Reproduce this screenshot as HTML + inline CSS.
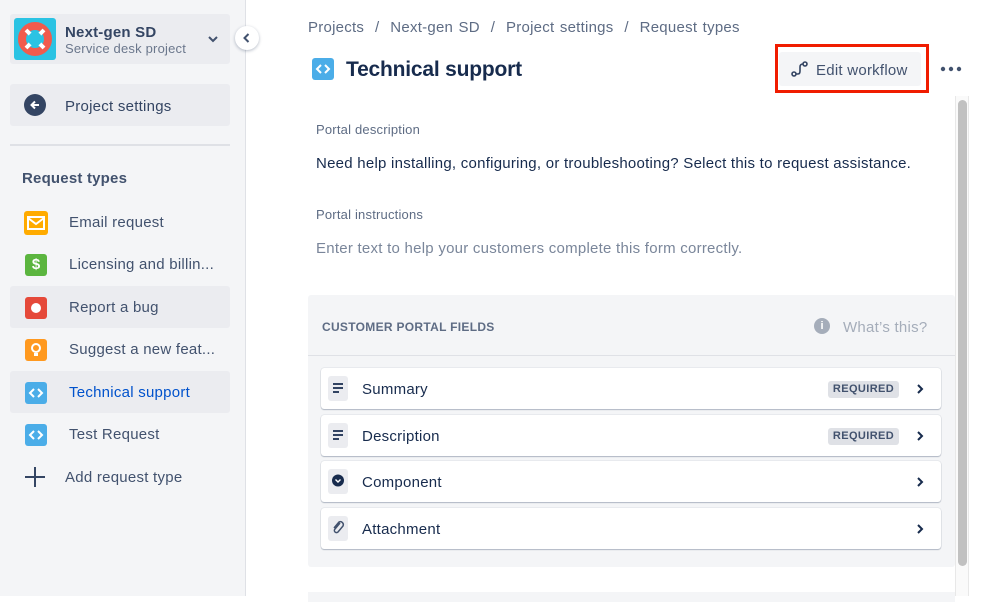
<!DOCTYPE html>
<html><head><meta charset="utf-8"><style>
*{box-sizing:border-box;margin:0;padding:0}
body{width:999px;height:596px;overflow:hidden;background:#fff;font-family:"Liberation Sans",sans-serif;color:#172b4d;position:relative}
.a{position:absolute}
.s15{font-size:15px;letter-spacing:.25px}
.side{left:0;top:0;width:246px;height:596px;background:#f4f5f7;border-right:1px solid #dfe1e6}
.item{position:absolute;left:10px;width:220px;height:42px;border-radius:3px}
.item .ic{position:absolute;left:14px;top:10px;width:24px;height:24px;border-radius:3px}
.item .t{position:absolute;left:59px;top:13px;font-size:15px;letter-spacing:.25px;color:#42526e}
.row{position:absolute;left:321px;width:620px;height:41px;background:#fff;border-radius:3px;box-shadow:0 1px 1px rgba(9,30,66,.25),0 0 1px rgba(9,30,66,.31)}
.row .ib{position:absolute;left:7px;top:8px;width:20px;height:25px;background:#ebecf0;border-radius:3px}
.row .t{position:absolute;left:41px;top:13px;font-size:15px;letter-spacing:.25px;color:#172b4d}
.req{position:absolute;left:507px;top:13px;width:71px;height:17px;background:#dfe1e6;border-radius:3px;font-size:11px;font-weight:bold;color:#42526e;text-align:center;line-height:17px;letter-spacing:.4px}
.chev{position:absolute;left:594px;top:14px}
</style></head><body>
<div class="a side"></div>
<div class="a" style="left:10px;top:14px;width:220px;height:50px;background:#ebecf0;border-radius:3px"></div>
<div class="a" style="left:14px;top:18px;width:42px;height:42px;background:#2bc3e3;border-radius:3px">
<svg width="42" height="42" viewBox="0 0 42 42"><circle cx="21" cy="21" r="13" fill="none" stroke="#f15b4d" stroke-width="8"/><g stroke="#fff" stroke-width="4"><path d="M12 12l5 5M30 12l-5 5M12 30l5-5M30 30l-5-5"/></g><circle cx="21" cy="21" r="7" fill="#2bc3e3"/></svg></div>
<div class="a" style="left:65px;top:24px;font-size:15px;font-weight:bold;color:#344563;letter-spacing:.2px">Next-gen SD</div>
<div class="a" style="left:65px;top:41px;font-size:13px;color:#6b778c;letter-spacing:.2px">Service desk project</div>
<svg class="a" style="left:207px;top:35px" width="12" height="8"><path d="M2 2l4 4 4-4" fill="none" stroke="#42526e" stroke-width="2"/></svg>
<div class="a" style="left:235px;top:26px;width:24px;height:24px;border-radius:50%;background:#fff;box-shadow:0 1px 3px rgba(9,30,66,.3)"><svg width="24" height="24"><path d="M13.5 8l-4 4 4 4" fill="none" stroke="#42526e" stroke-width="2"/></svg></div>
<div class="a" style="left:10px;top:84px;width:220px;height:42px;background:#ebecf0;border-radius:3px"></div>
<div class="a" style="left:24px;top:94px;width:22px;height:22px;border-radius:50%;background:#344563"><svg width="22" height="22"><path d="M15 11H8M11 7.5L7.5 11 11 14.5" fill="none" stroke="#fff" stroke-width="2"/></svg></div>
<div class="a s15" style="left:65px;top:98px;color:#344563">Project settings</div>
<div class="a" style="left:10px;top:144px;width:220px;height:2px;background:#dfe1e6"></div>
<div class="a" style="left:22px;top:170px;font-size:15px;font-weight:bold;color:#42526e;letter-spacing:.2px">Request types</div>

<div class="item" style="top:201px"><div class="ic" style="background:#ffab00"><svg width="24" height="24"><rect x="4" y="6" width="16" height="12" fill="none" stroke="#fff" stroke-width="2"/><path d="M4 7l8 6 8-6" fill="none" stroke="#fff" stroke-width="2"/></svg></div><div class="t">Email request</div></div>
<div class="item" style="top:243px"><div class="ic" style="background:#5bb53f;left:15px;width:22px;height:22px;top:11px"><div style="color:#fff;font-weight:bold;font-size:15px;text-align:center;line-height:22px">$</div></div><div class="t">Licensing and billin...</div></div>
<div class="item" style="top:286px;background:#ebecf0"><div class="ic" style="background:#e5493a;left:15px;width:22px;height:22px;top:11px"><div style="position:absolute;left:6px;top:6px;width:10px;height:10px;border-radius:50%;background:#fff"></div></div><div class="t">Report a bug</div></div>
<div class="item" style="top:328px"><div class="ic" style="background:#ff991f;left:15px;width:22px;height:22px;top:11px"><svg width="22" height="22"><circle cx="11" cy="9" r="4" fill="none" stroke="#fff" stroke-width="2"/><path d="M9 14h4v3H9z" fill="#fff"/></svg></div><div class="t">Suggest a new feat...</div></div>
<div class="item" style="top:371px;background:#ebecf0"><div class="ic" style="background:#4bade8;left:15px;width:22px;height:22px;top:11px"><svg width="22" height="22"><path d="M9 7l-4 4 4 4M13 7l4 4-4 4" fill="none" stroke="#fff" stroke-width="2"/></svg></div><div class="t" style="color:#0052cc">Technical support</div></div>
<div class="item" style="top:413px"><div class="ic" style="background:#4bade8;left:15px;width:22px;height:22px;top:11px"><svg width="22" height="22"><path d="M9 7l-4 4 4 4M13 7l4 4-4 4" fill="none" stroke="#fff" stroke-width="2"/></svg></div><div class="t">Test Request</div></div>
<svg class="a" style="left:24px;top:466px" width="22" height="22"><path d="M11 1v20M1 11h20" stroke="#344563" stroke-width="2"/></svg>
<div class="a s15" style="left:65px;top:469px;color:#42526e">Add request type</div>

<div class="a s15" style="left:308px;top:19px;color:#5e6c84;word-spacing:1px">Projects &nbsp;/&nbsp; Next-gen SD &nbsp;/&nbsp; Project settings &nbsp;/&nbsp; Request types</div>
<div class="a" style="left:312px;top:58px;width:22px;height:22px;background:#4bade8;border-radius:3px"><svg width="22" height="22"><path d="M9 7l-4 4 4 4M13 7l4 4-4 4" fill="none" stroke="#fff" stroke-width="2"/></svg></div>
<div class="a" style="left:346px;top:58px;font-size:21px;font-weight:bold;color:#172b4d;letter-spacing:-.2px">Technical support</div>
<div class="a" style="left:775px;top:44px;width:154px;height:49px;border:3px solid #f01c00"></div>
<div class="a" style="left:779px;top:52px;width:142px;height:34px;background:#f4f5f7;border-radius:3px"></div>
<svg class="a" style="left:790px;top:60px" width="20" height="18"><circle cx="4" cy="14" r="2" fill="none" stroke="#344563" stroke-width="1.6"/><circle cx="15" cy="4" r="2" fill="none" stroke="#344563" stroke-width="1.6"/><path d="M6 14h2q2 0 2-3V7q0-3 3-3" fill="none" stroke="#344563" stroke-width="1.6"/></svg>
<div class="a s15" style="left:816px;top:62px;color:#42526e">Edit workflow</div>
<svg class="a" style="left:940px;top:66px" width="22" height="6"><circle cx="3" cy="3" r="2.2" fill="#42526e"/><circle cx="11" cy="3" r="2.2" fill="#42526e"/><circle cx="19" cy="3" r="2.2" fill="#42526e"/></svg>

<div class="a" style="left:955px;top:96px;width:14px;height:500px;background:#fafafa;border-left:1px solid #e8e8e8;border-right:1px solid #e8e8e8"></div>
<div class="a" style="left:958px;top:100px;width:9px;height:466px;background:#c1c1c1;border-radius:5px"></div>

<div class="a" style="left:316px;top:122px;font-size:13px;color:#5e6c84;letter-spacing:.2px">Portal description</div>
<div class="a s15" style="left:316px;top:155px;color:#172b4d">Need help installing, configuring, or troubleshooting? Select this to request assistance.</div>
<div class="a" style="left:316px;top:207px;font-size:13px;color:#5e6c84;letter-spacing:.2px">Portal instructions</div>
<div class="a s15" style="left:316px;top:240px;color:#7a869a">Enter text to help your customers complete this form correctly.</div>

<div class="a" style="left:308px;top:295px;width:647px;height:272px;background:#f4f5f7;border-radius:3px"></div>
<div class="a" style="left:308px;top:355px;width:647px;height:1px;background:#dfe1e6"></div>
<div class="a" style="left:322px;top:320px;font-size:12px;font-weight:bold;color:#5e6c84;letter-spacing:.3px">CUSTOMER PORTAL FIELDS</div>
<div class="a" style="left:814px;top:318px;width:16px;height:16px;border-radius:50%;background:#a5adba;color:#fff;font-size:11px;font-weight:bold;text-align:center;line-height:16px">i</div>
<div class="a s15" style="left:843px;top:319px;color:#a5adba">What’s this?</div>

<div class="row" style="top:368px"><div class="ib"><svg width="20" height="25"><path d="M5 8h10M5 12h10M5 16h6" stroke="#172b4d" stroke-width="1.8"/></svg></div><div class="t">Summary</div><div class="req">REQUIRED</div><svg class="chev" width="10" height="14"><path d="M3 3l4 4-4 4" fill="none" stroke="#172b4d" stroke-width="2"/></svg></div>
<div class="row" style="top:415px"><div class="ib"><svg width="20" height="25"><path d="M5 8h10M5 12h10M5 16h6" stroke="#172b4d" stroke-width="1.8"/></svg></div><div class="t">Description</div><div class="req">REQUIRED</div><svg class="chev" width="10" height="14"><path d="M3 3l4 4-4 4" fill="none" stroke="#172b4d" stroke-width="2"/></svg></div>
<div class="row" style="top:461px"><div class="ib"><svg width="20" height="25"><circle cx="10" cy="11.5" r="6" fill="#172b4d"/><path d="M7.5 10.5l2.5 2.5 2.5-2.5" fill="none" stroke="#fff" stroke-width="1.4"/></svg></div><div class="t">Component</div><svg class="chev" width="10" height="14"><path d="M3 3l4 4-4 4" fill="none" stroke="#172b4d" stroke-width="2"/></svg></div>
<div class="row" style="top:508px"><div class="ib"><svg width="20" height="25"><path d="M12 7l-5 6a2 2 0 0 0 3 3l5-6a3 3 0 0 0-4-4l-5 6" fill="none" stroke="#42526e" stroke-width="1.5"/></svg></div><div class="t">Attachment</div><svg class="chev" width="10" height="14"><path d="M3 3l4 4-4 4" fill="none" stroke="#172b4d" stroke-width="2"/></svg></div>

<div class="a" style="left:308px;top:592px;width:647px;height:10px;background:#f4f5f7"></div>
</body></html>
